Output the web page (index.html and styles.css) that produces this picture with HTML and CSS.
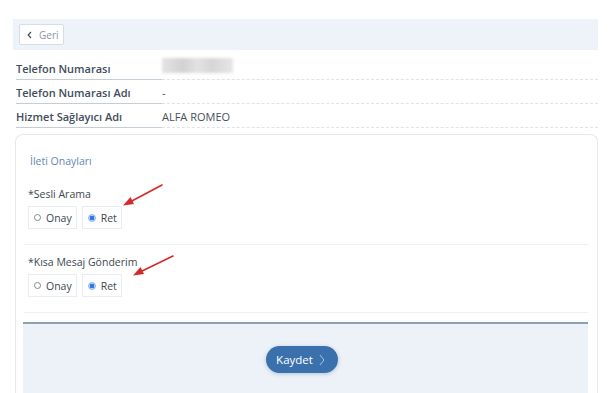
FILE: index.html
```html
<!DOCTYPE html>
<html lang="tr">
<head>
    <meta charset="UTF-8">
    <meta name="viewport" content="width=device-width, initial-scale=1.0">
    <title>İleti Onayları</title>
    <link rel="stylesheet" href="styles.css">
</head>
<body>
    <div class="page">
        <div class="toolbar">
            <button class="back-btn">
                <svg class="chev" width="5" height="8" viewBox="0 0 5 8"><path d="M4 1 L1.2 4 L4 7" fill="none" stroke="#3d4750" stroke-width="1.1"/></svg>
                Geri
            </button>
        </div>

        <div class="info">
            <div class="info-row">
                <div class="info-label">Telefon Numarası</div>
                <div class="info-value"><span class="blurred"></span></div>
            </div>
            <div class="info-row">
                <div class="info-label">Telefon Numarası Adı</div>
                <div class="info-value">-</div>
            </div>
            <div class="info-row">
                <div class="info-label">Hizmet Sağlayıcı Adı</div>
                <div class="info-value">ALFA ROMEO</div>
            </div>
        </div>

        <div class="card">
            <div class="card-title">İleti Onayları</div>

            <div class="field">
                <div class="field-label">*Sesli Arama</div>
                <div class="options">
                    <label class="option"><span class="radio"></span>Onay</label>
                    <label class="option"><span class="radio checked"></span>Ret</label>
                </div>
            </div>

            <div class="field">
                <div class="field-label">*Kısa Mesaj Gönderim</div>
                <div class="options">
                    <label class="option"><span class="radio"></span>Onay</label>
                    <label class="option"><span class="radio checked"></span>Ret</label>
                </div>
            </div>

            <div class="footer">
                <button class="save-btn">Kaydet
                    <svg width="6" height="12" viewBox="0 0 6 12"><path d="M1 1 L5 6 L1 11" fill="none" stroke="#aac3df" stroke-width="1"/></svg>
                </button>
            </div>
        </div>

        <svg class="arrows" width="614" height="393" viewBox="0 0 614 393">
            <g stroke="#d42a2a" stroke-width="1.6" fill="#d42a2a" stroke-linecap="round">
                <line x1="162" y1="185" x2="130" y2="202"/>
                <polygon points="123,205.5 130.5,197 134,204" stroke="none"/>
                <line x1="173" y1="256" x2="140" y2="272"/>
                <polygon points="133,275.5 140.5,267 144,274" stroke="none"/>
            </g>
        </svg>
    </div>
</body>
</html>
```

FILE: styles.css
```css
body {
    margin: 0;
    background: #ffffff;
    font-family: "Open Sans", "Noto Sans", sans-serif;
    font-size: 11px;
    color: #3d4750;
}

.page {
    position: relative;
    width: 585px;
    height: 393px;
    padding: 19px 0 0 13px;
    box-sizing: content-box;
    overflow: hidden;
}

.toolbar {
    background: #eef2f9;
    height: 31px;
    padding: 6px;
    box-sizing: border-box;
    display: flex;
    align-items: center;
}

.back-btn {
    font-family: inherit;
    font-size: 10px;
    color: #8795a2;
    background: #ffffff;
    border: 1px solid #d6dde4;
    border-radius: 2px;
    height: 21px;
    padding: 0 4px 0 7px;
    display: flex;
    align-items: center;
    gap: 7px;
}

.info {
    margin: 5px 0 0 3px;
}

.info-row {
    display: flex;
    height: 24px;
    align-items: stretch;
}

.info-row:first-child {
    height: 25px;
}

.info-label {
    width: 146px;
    font-weight: 600;
    color: #3f4d5c;
    border-bottom: 1px solid #c4ccd4;
    display: flex;
    align-items: center;
    padding-top: 2px;
}

.info-value {
    flex: 1;
    color: #45505a;
    border-bottom: 1px dashed #dde3e8;
    display: flex;
    align-items: center;
    padding-top: 2px;
}

.blurred {
    display: inline-block;
    width: 71px;
    height: 15px;
    margin-top: -6px;
    background: linear-gradient(90deg, #e3e3e3, #d2d2d2 30%, #e2e2e2 50%, #d6d6d6 70%, #e6e6e6);
    filter: blur(1.5px);
}

.card {
    margin: 6px 0 0 2px;
    border: 1px solid #e4e9ee;
    border-radius: 8px;
    border-bottom: none;
    padding: 19px 9px 0 8px;
    height: 300px;
}

.card-title {
    color: #5f88b4;
    font-size: 10.5px;
    margin: 0 0 19px 6px;
}

.field {
    border-bottom: 1px solid #eef1f4;
    padding: 0 0 15px 4px;
    margin-bottom: 10px;
}

.field + .field {
    padding-bottom: 15px;
    margin-bottom: 9px;
}

.field-label {
    font-size: 10.5px;
    color: #3d4750;
    margin-bottom: 5px;
}

.options {
    display: flex;
    gap: 5px;
}

.option {
    display: flex;
    align-items: center;
    height: 23px;
    border: 1px solid #e9edf1;
    box-sizing: border-box;
    padding: 0 4px 0 5px;
    font-size: 10.5px;
    color: #3d4750;
}

.radio {
    width: 7px;
    height: 7px;
    border: 1px solid #808a93;
    border-radius: 50%;
    margin-right: 5px;
    box-sizing: border-box;
}

.radio.checked {
    border-color: #8fb6e8;
    background: radial-gradient(circle, #2f7be0 55%, #bcd5f4 60%);
    width: 8px;
    height: 8px;
}

.footer {
    margin: 0 0 0 -1px;
    background: #edf2f8;
    border-top: 2px solid #8aa2b4;
    height: 80px;
    display: flex;
    justify-content: center;
    padding-top: 22px;
    padding-right: 8px;
    box-sizing: border-box;
}

.save-btn {
    font-family: inherit;
    font-size: 11.5px;
    color: #ffffff;
    background: #3a71ad;
    border: none;
    border-radius: 14px;
    height: 27px;
    width: 72px;
    box-shadow: 0 1px 4px rgba(58, 113, 173, 0.35);
    display: flex;
    align-items: center;
    justify-content: center;
    gap: 6px;
    padding-left: 4px;
}

.arrows {
    position: absolute;
    left: 0;
    top: 0;
    pointer-events: none;
}
```
